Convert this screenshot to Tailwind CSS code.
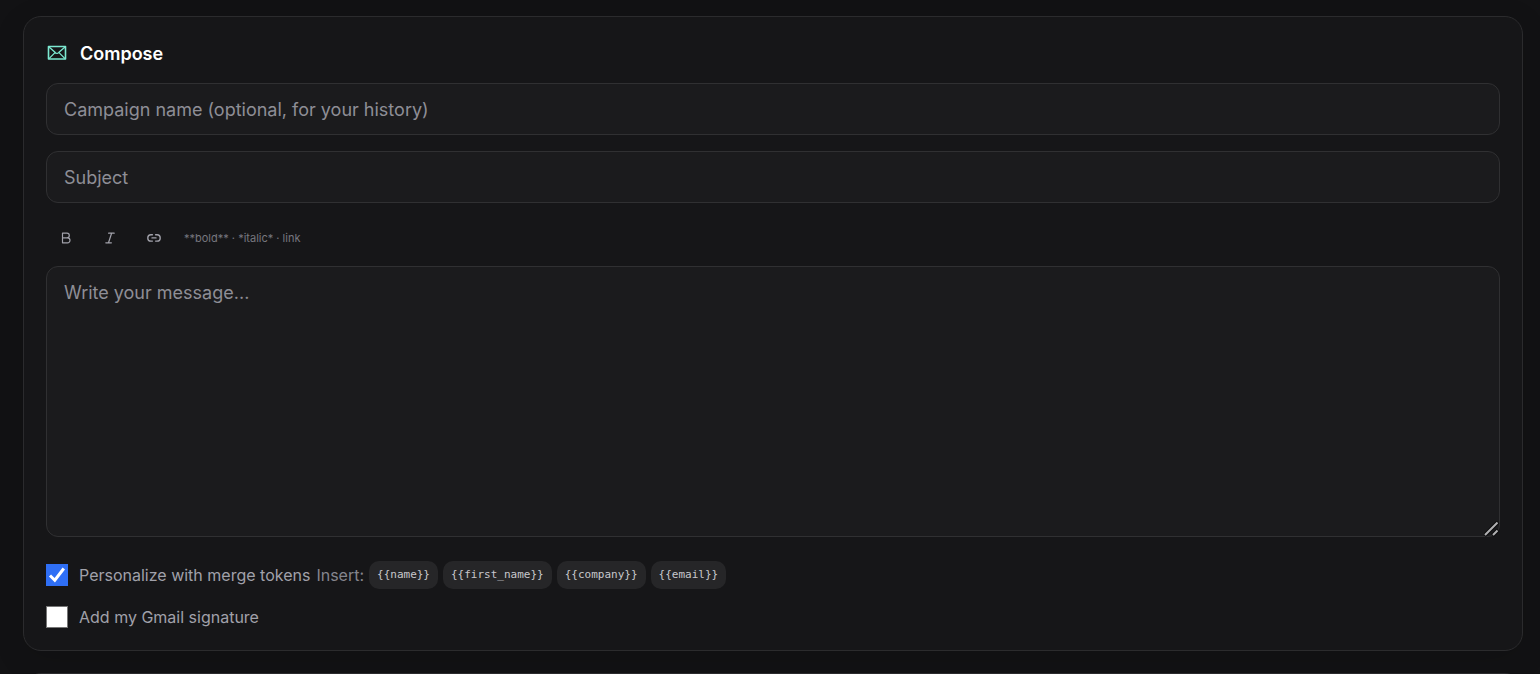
<!DOCTYPE html>
<html lang="en">
<head>
<meta charset="utf-8">
<meta name="viewport" content="width=device-width, initial-scale=1">
<title>Compose</title>
<script src="https://cdn.jsdelivr.net/npm/@tailwindcss/browser@4"></script>
</head>
<body class="h-screen overflow-hidden bg-[#121214] pt-4 pr-[17px] pl-[23px] font-['Inter',sans-serif] text-[#a1a1aa]">
<main class="flex flex-col gap-[22px]">
  <section class="rounded-[18px] border border-[#2b2b2d] bg-[#161618] px-[22px] pt-[22px] pb-[21px] shadow-[0_8px_32px_rgba(0,0,0,0.12)]">
    <h2 class="flex h-7 items-center gap-3 text-lg font-semibold text-white">
      <svg class="size-[22px]" viewBox="0 0 22 22" fill="none" stroke="#7ce8d0" stroke-width="1.6" stroke-linejoin="round" stroke-linecap="round" aria-hidden="true">
        <rect x="2.500" y="4.500" width="17" height="12.500"/>
        <path stroke-width="1.300" d="M3 5 9.300 10.600Q11 12.200 12.700 10.600L19 5M3 16.600l6-6M19 16.600l-6-6"/>
      </svg>
      <span class="pt-0.5">Compose</span>
    </h2>
    <div class="mt-4 flex flex-col gap-4">
      <input type="text" aria-label="Campaign name" placeholder="Campaign name (optional, for your history)" class="h-[52px] w-full rounded-xl border border-[#303032] bg-[#1b1b1d] px-[17px] text-lg text-white outline-none placeholder:text-[#8e8e96]">
      <input type="text" aria-label="Subject" placeholder="Subject" class="h-[52px] w-full rounded-xl border border-[#303032] bg-[#1b1b1d] px-[17px] text-lg text-white outline-none placeholder:text-[#8e8e96]">
    </div>
    <div class="mt-4 flex h-[38px] items-center gap-1 text-[#a1a1aa]">
      <button type="button" aria-label="Bold" class="grid h-8 w-10 place-items-center">
        <svg class="size-4" viewBox="0 0 16 16" fill="none" stroke="currentColor" stroke-width="1.2" stroke-linejoin="round"><path d="M4.500 3.200h4.500a2.200 2.200 0 0 1 0 4.600H4.500zM4.500 7.800h5a2.500 2.500 0 0 1 0 5h-5z"/></svg>
      </button>
      <button type="button" aria-label="Italic" class="grid h-8 w-10 place-items-center">
        <svg class="size-4" viewBox="0 0 16 16" fill="none" stroke="currentColor" stroke-width="1.2" stroke-linecap="round"><path d="M6.600 3.200h5.600M3.800 12.800h5.600M9.600 3.200 6.500 12.800"/></svg>
      </button>
      <button type="button" aria-label="Link" class="grid h-8 w-10 place-items-center">
        <svg class="size-4" viewBox="0 0 16 16" fill="none" stroke="currentColor" stroke-width="1.4" stroke-linecap="round"><path d="M6.400 4.700H5a3.200 3.200 0 0 0 0 6.400h1.400M9.600 4.700H11a3.200 3.200 0 0 1 0 6.400H9.600M6 7.900h4"/></svg>
      </button>
      <span class="ml-1.5 text-[11px] text-[#77777f]">**bold** · *italic* · link</span>
    </div>
    <div class="relative mt-[9px]">
      <textarea aria-label="Message" placeholder="Write your message..." class="block h-[271px] w-full resize-none rounded-xl border border-[#303032] bg-[#1b1b1d] px-[17px] py-3 text-lg text-white outline-none placeholder:text-[#8e8e96]"></textarea>
      <svg class="pointer-events-none absolute right-0 bottom-0 size-4" viewBox="0 0 16 16" fill="none" aria-hidden="true">
        <path d="M.500 14.500 14 1M8.500 14.500 14 9" stroke="#0c0c0d" stroke-width="4"/>
        <path d="M1 14 13.500 1.500M9 14 13.500 9.500" stroke="#b0b0b2" stroke-width="2"/>
      </svg>
    </div>
    <div class="mt-[22px] flex flex-wrap items-center gap-x-1.5 gap-y-2">
      <label class="flex h-8 items-center gap-[11px] text-base">
        <span class="grid">
          <input type="checkbox" checked class="peer col-start-1 row-start-1 size-[22px] appearance-none border border-[#767676] bg-white checked:border-[#2f6ff5] checked:bg-[#2f6ff5]">
          <svg class="pointer-events-none invisible col-start-1 row-start-1 size-[22px] peer-checked:visible" viewBox="0 0 22 22" fill="none" stroke="#fff" stroke-width="3" aria-hidden="true"><path d="m4 11.500 4.800 4.700L17.800 4.500"/></svg>
        </span>
        Personalize with merge tokens
      </label>
      <div class="flex items-center gap-[5px]">
        <span class="text-base text-[#85858d]">Insert:</span>
        <button type="button" class="h-7 rounded-[10px] bg-[#262628] px-2 font-['DejaVu_Sans_Mono',monospace] text-[11px] text-[#c8c8cc]">{{name}}</button>
        <button type="button" class="h-7 rounded-[10px] bg-[#262628] px-2 font-['DejaVu_Sans_Mono',monospace] text-[11px] text-[#c8c8cc]">{{first_name}}</button>
        <button type="button" class="h-7 rounded-[10px] bg-[#262628] px-2 font-['DejaVu_Sans_Mono',monospace] text-[11px] text-[#c8c8cc]">{{company}}</button>
        <button type="button" class="h-7 rounded-[10px] bg-[#262628] px-2 font-['DejaVu_Sans_Mono',monospace] text-[11px] text-[#c8c8cc]">{{email}}</button>
      </div>
    </div>
    <label class="mt-3.5 flex w-fit items-center gap-[11px] text-base">
      <span class="grid">
        <input type="checkbox" class="peer col-start-1 row-start-1 size-[22px] appearance-none border border-[#767676] bg-white checked:border-[#2f6ff5] checked:bg-[#2f6ff5]">
        <svg class="pointer-events-none invisible col-start-1 row-start-1 size-[22px] peer-checked:visible" viewBox="0 0 22 22" fill="none" stroke="#fff" stroke-width="3" aria-hidden="true"><path d="m4 11.500 4.800 4.700L17.800 4.500"/></svg>
      </span>
      Add my Gmail signature
    </label>
  </section>
  <section class="h-24 rounded-[18px] border border-[#2b2b2d] bg-[#161618]"></section>
</main>
</body>
</html>
